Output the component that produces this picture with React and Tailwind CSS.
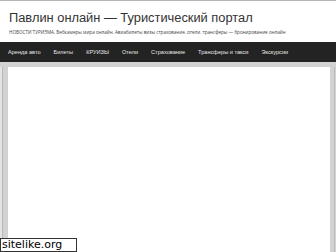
export default function App() {
    const menu = ['Аренда авто', 'Билеты', 'КРУИЗЫ', 'Отели', 'Страхование', 'Трансферы и такси', 'Экскурсии'];

    return (
        <div className="relative w-[336px] h-[252px] overflow-hidden bg-[#d2d2d2] font-['Open_Sans',sans-serif]">
            {/* header */}
            <div className="bg-white border-t border-[#b5b5b5] h-[42px] pl-[9px] pt-[8px]">
                <h1 className="font-['Liberation_Sans',sans-serif] text-[12.85px] leading-[17px] text-[#333]">
                    Павлин онлайн — Туристический портал
                </h1>
                <p className="mt-[3px] text-[4.6px] leading-[6px] text-[#444]">
                    НОВОСТИ ТУРИЗМА. Вебкамеры мира онлайн. Авиабилеты визы страхование. отели. трансферы — бронирование онлайн
                </p>
            </div>

            {/* nav */}
            <nav className="h-[20px] bg-[#232323] flex items-center pl-[8px] gap-[13px] font-['Liberation_Sans',sans-serif] text-[5.6px] text-[#e6e6e6]">
                {menu.map((m) => (
                    <span key={m}>{m}</span>
                ))}
            </nav>

            {/* body */}
            <div className="flex h-[190px] pt-[5px]">
                <div className="w-[8px] flex">
                    <div className="w-[2px] bg-[#e4e4e4]" />
                    <div className="w-[1px] bg-[#b8b8b8]" />
                </div>
                <div className="flex-1 bg-white" />
                <div className="w-[6px] flex justify-end">
                    <div className="w-[1px] bg-[#bdbdbd] mr-[1px]" />
                </div>
            </div>

            {/* watermark */}
            <div className="absolute left-0 bottom-0 w-[77px] h-[14px] bg-white border border-[#333] font-['DejaVu_Sans',sans-serif] text-[11px] leading-[12px] text-black pl-[1px]">
                sitelike.org
            </div>
        </div>
    );
}
